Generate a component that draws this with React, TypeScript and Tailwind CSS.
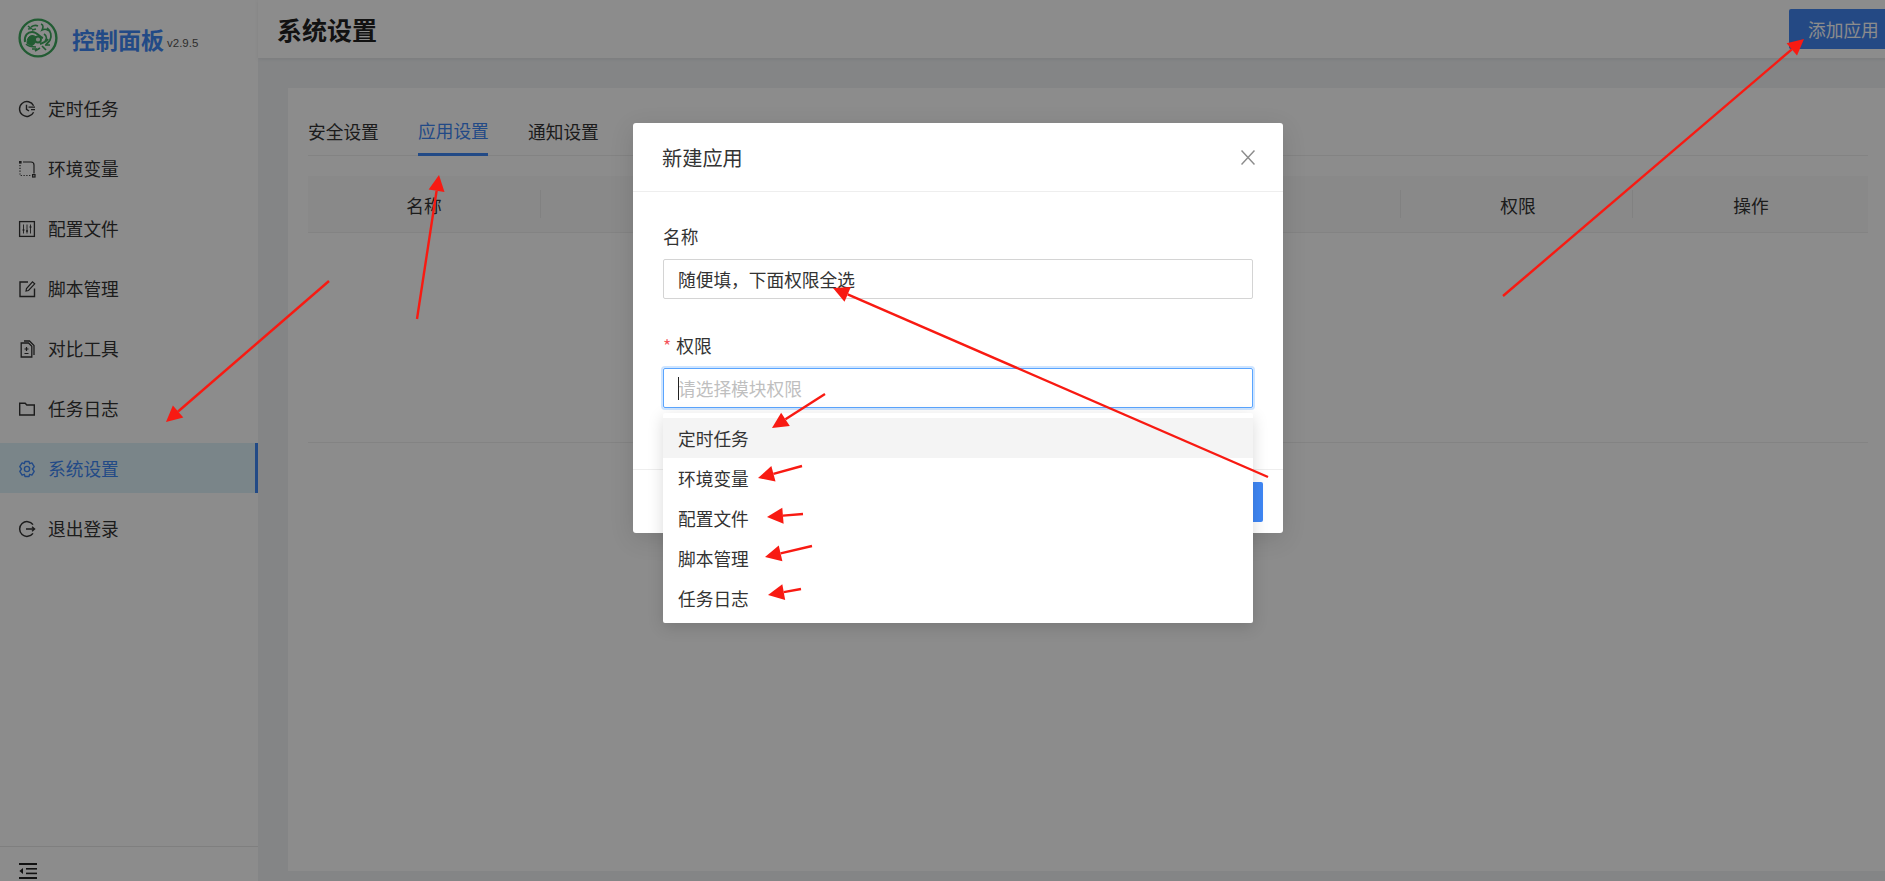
import React from "react";

const FONT = { fontFamily: '"Noto Sans CJK SC", "Liberation Sans", sans-serif' };

const Clock = () => (
  <svg width="18" height="18" viewBox="0 0 18 18" fill="none" stroke="currentColor" strokeWidth="1.4">
    <path d="M15.6 5.8A7.4 7.4 0 1 0 15.6 12.2" />
    <path d="M8.5 4.8V9.3L11 11" />
    <path d="M10.5 7.2H17M13 9.6H17" strokeWidth="1.2" />
  </svg>
);
const Dashed = () => (
  <svg width="18" height="18" viewBox="0 0 18 18" fill="none" stroke="currentColor" strokeWidth="1.2">
    <rect x="1" y="1" width="2.6" height="2.6" fill="currentColor" stroke="none" />
    <rect x="14.6" y="14.6" width="2.4" height="2.4" />
    <path d="M5 2H13A3 3 0 0 1 16 5V13.5" />
    <path d="M2 5V15.5H13.5" strokeDasharray="1.2 1.6" />
  </svg>
);
const Sliders = () => (
  <svg width="18" height="18" viewBox="0 0 18 18" fill="none" stroke="currentColor" strokeWidth="1.3">
    <rect x="1.6" y="1.6" width="14.8" height="14.8" />
    <path d="M5.5 4.5V13.5M9 4.5V13.5M12.5 4.5V13.5" strokeWidth="0.9" />
    <circle cx="5.5" cy="10" r="1" fill="currentColor" stroke="none" />
    <circle cx="9" cy="11" r="1" fill="currentColor" stroke="none" />
    <circle cx="12.5" cy="7" r="1" fill="currentColor" stroke="none" />
  </svg>
);
const Edit = () => (
  <svg width="18" height="18" viewBox="0 0 18 18" fill="none" stroke="currentColor" strokeWidth="1.4">
    <path d="M10 2H2V16.5H16.5V8.5" />
    <path d="M8 11L8.5 8.5L14.5 1.8L16.7 3.8L10.5 10.5Z" strokeWidth="1.2" />
  </svg>
);
const FileDiff = () => (
  <svg width="18" height="18" viewBox="0 0 18 18" fill="none" stroke="currentColor" strokeWidth="1.3">
    <path d="M10.5 3H3.2V17H13.8V6.3Z" />
    <path d="M6 1H11.5L16 5.5V15" />
    <path d="M8.5 7V11M6.5 9H10.5M6.5 13.5H10.5" strokeWidth="1.2" />
  </svg>
);
const Folder = () => (
  <svg width="18" height="18" viewBox="0 0 18 18" fill="none" stroke="currentColor" strokeWidth="1.4">
    <path d="M1.7 3.2H7.2L8.8 5H16.3V15H1.7Z" />
  </svg>
);
const Gear = () => (
  <svg width="18" height="18" viewBox="0 0 18 18" fill="none" stroke="currentColor" strokeWidth="1.4">
    <path d="M7 1.5H11L11.7 3.7L13.9 2.9L16.2 6.6L14.5 9L16.2 11.4L13.9 15.1L11.7 14.3L11 16.5H7L6.3 14.3L4.1 15.1L1.8 11.4L3.5 9L1.8 6.6L4.1 2.9L6.3 3.7Z" strokeLinejoin="round" />
    <circle cx="9" cy="9" r="2.6" />
  </svg>
);
const Exit = () => (
  <svg width="18" height="18" viewBox="0 0 18 18" fill="none" stroke="currentColor" strokeWidth="1.5">
    <path d="M15 4.6A7.4 7.4 0 1 0 15 13.4" />
    <path d="M8 9H16.5M14 6.8L16.6 9L14 11.2" strokeWidth="1.3" />
  </svg>
);
const Collapse = () => (
  <svg width="18" height="16" viewBox="0 0 18 16" fill="#222">
    <rect x="0" y="0" width="18" height="2" />
    <rect x="7" y="5" width="11" height="1.6" />
    <rect x="7" y="9.6" width="11" height="1.6" />
    <rect x="0" y="14" width="18" height="2" />
    <path d="M4 5L0.4 8L4 11Z" />
  </svg>
);

const Logo = () => (
  <svg width="40" height="40" viewBox="0 0 40 40" fill="none" stroke="#3fa85e">
    <circle cx="20" cy="20" r="18.4" strokeWidth="2.4" />
    <path d="M7 24C6 17 10 14 14 14C19 14 22 19 25 20" strokeWidth="2" />
    <path d="M10 8L13 10.5L10 11M13 9C16 7 18 7 20 8M14 12L18 11" strokeWidth="1.6" />
    <path d="M23 6C26 7 25 10 24 12C26 11 29 11 31 13" strokeWidth="1.6" />
    <path d="M29 10C33 13 34 18 32 22C31 24 29 25 28 27" strokeWidth="1.8" />
    <path d="M26 16C29 18 29 21 27 23" strokeWidth="1.6" />
    <path d="M8 26C11 29 15 29 18 29M14 31L19 31M17 33L22 30M24 28L28 32M27 27L32 27" strokeWidth="1.7" />
    <path d="M9 25C9 17 15 16 18 19C18 27 14 30 9 25Z" fill="#3fa85e" strokeWidth="1" />
    <circle cx="20" cy="21.5" r="3" fill="#e6f3e9" strokeWidth="1.8" />
    <path d="M22 26C25 25 28 24 30 21" strokeWidth="2" />
  </svg>
);

const NAV: [string, React.ReactNode, boolean?][] = [
  ["定时任务", <Clock />],
  ["环境变量", <Dashed />],
  ["配置文件", <Sliders />],
  ["脚本管理", <Edit />],
  ["对比工具", <FileDiff />],
  ["任务日志", <Folder />],
  ["系统设置", <Gear />, true],
  ["退出登录", <Exit />],
];

const ARROWS: [number, number, number, number][] = [
  [329, 281, 166, 422],
  [417, 319, 439, 175],
  [1503, 296, 1804, 39],
  [1268, 477, 833, 288],
  [825, 394, 772, 428],
  [802, 466, 758, 478],
  [803, 514, 767, 517],
  [812, 546, 765, 557],
  [801, 589, 768, 595],
];

function Arrow({ a }: { a: [number, number, number, number] }) {
  const [x1, y1, x2, y2] = a;
  const len = Math.hypot(x2 - x1, y2 - y1);
  const ux = (x2 - x1) / len;
  const uy = (y2 - y1) / len;
  const bx = x2 - ux * 16;
  const by = y2 - uy * 16;
  const pts = `${x2},${y2} ${bx - uy * 8},${by + ux * 8} ${bx + uy * 8},${by - ux * 8}`;
  return (
    <g>
      <line x1={x1} y1={y1} x2={bx} y2={by} stroke="#f81a12" strokeWidth="2.4" />
      <polygon points={pts} fill="#f81a12" />
    </g>
  );
}

export default function App() {
  return (
    <div style={FONT} className="relative flex h-[881px] w-[1885px] overflow-hidden bg-[#f0f2f5] text-[17.7px] text-[#333]">
      <aside className="flex w-[258px] shrink-0 flex-col bg-white">
        <div className="flex h-[83px] items-start pl-[18px] pt-[18px]">
          <Logo />
          <span className="ml-[14px] mt-[5px] text-[23px] font-bold leading-[32px] text-[#3f87f5]">控制面板</span>
          <span className="ml-[3px] mt-[17px] text-[11.5px] leading-[16px] text-[#555]" style={{ fontFamily: '"Liberation Sans", sans-serif' }}>v2.9.5</span>
        </div>
        <nav className="flex flex-1 flex-col gap-[10px]">
          {NAV.map(([label, icon, active]) => (
            <div
              key={label}
              className={
                active
                  ? "flex h-[50px] items-center gap-[12px] border-r-[3px] border-[#3f87f5] bg-[#def2fa] pl-[18px] pt-[1px] text-[#3f87f5]"
                  : "flex h-[50px] items-center gap-[12px] pl-[18px] pt-[1px]"
              }
            >
              {icon}
              <span>{label}</span>
            </div>
          ))}
        </nav>
        <div className="flex h-[35px] items-start border-t border-[#e8e8e8] pl-[19px] pt-[16px]">
          <Collapse />
        </div>
      </aside>

      <main className="flex w-[1664px] shrink-0 flex-col">
        <header className="flex h-[58px] shrink-0 items-center justify-between bg-white pl-[19px] pr-[25px] shadow-[0_1px_4px_rgba(0,0,0,0.08)]">
          <h1 className="text-[25px] font-bold leading-none text-[#222]">系统设置</h1>
          <button className="h-[40px] w-[108px] rounded-[2px] bg-[#4385f0] pl-[19px] text-left text-white">添加应用</button>
        </header>
        <section className="mx-[30px] mb-[10px] mt-[30px] flex-1 bg-white px-[20px] pt-[20px] pr-[24px]">
          <div className="flex h-[48px] gap-[40px] border-b border-[#eeeeee]">
            <div className="flex h-[48px] w-[70px] items-center whitespace-nowrap pb-[2px]">安全设置</div>
            <div className="flex h-[48px] w-[70px] items-center whitespace-nowrap border-b-[3px] border-[#3f87f5] text-[#3f87f5]">应用设置</div>
            <div className="flex h-[48px] w-[70px] items-center whitespace-nowrap pb-[2px]">通知设置</div>
          </div>
          <div className="mt-[20px] flex h-[57px] items-center border-b border-[#eeeeee] bg-[#fafafa]">
            <div className="flex h-[28px] w-[233px] items-center justify-center border-r border-[#ececec] pt-[2px]">名称</div>
            <div className="h-[28px] w-[860px] border-r border-[#ececec]" />
            <div className="flex h-[28px] w-[232px] items-center justify-center border-r border-[#ececec] pl-[3px] pt-[2px]">权限</div>
            <div className="flex h-[28px] flex-1 items-center justify-center pl-[1px] pt-[2px]">操作</div>
          </div>
          <div className="h-[210px] border-b border-[#eeeeee]" />
        </section>
      </main>

      <div className="absolute inset-0 bg-black/45 pl-[633px] pt-[123px]">
        <div className="relative w-[650px] rounded-[3px] bg-white shadow-[0_6px_24px_rgba(0,0,0,0.12)]">
          <div className="flex h-[69px] items-center justify-between border-b border-[#eeeeee] pl-[29px] pr-[28px] pt-[2px]">
            <span className="text-[20.2px]">新建应用</span>
            <svg className="-mt-[2px]" width="14" height="15" viewBox="0 0 14 15" stroke="#8c8c8c" strokeWidth="1.5" fill="none">
              <path d="M0.5 0.5L13.5 14.5M13.5 0.5L0.5 14.5" />
            </svg>
          </div>
          <div className="h-[277px] px-[30px] pt-[31px]">
            <label className="block h-[26px] leading-[26px]">名称</label>
            <input
              readOnly
              value="随便填，下面权限全选"
              className="mt-[10px] block h-[40px] w-[590px] rounded-[2px] border border-[#d4d4d4] px-[14px] outline-none"
            />
            <label className="mt-[33px] block h-[26px] leading-[26px]">
              <span className="mr-[5px] text-[#f5545a]">*</span>权限
            </label>
            <div className="relative mt-[10px] flex h-[40px] w-[590px] items-center rounded-[2px] border border-[#5aa5ff] pl-[14px] text-[#bfbfbf] shadow-[0_0_0_2px_rgba(64,150,255,0.25)]">
              <span className="absolute left-[14px] top-[8px] h-[23px] w-px bg-[#222]" />
              请选择模块权限
            </div>
          </div>
          <div className="flex h-[64px] items-start justify-end border-t border-[#eeeeee] pr-[20px] pt-[12px]">
            <button className="h-[40px] w-[90px] rounded-[2px] bg-[#3f87f5] text-white">确定</button>
          </div>

          <ul className="absolute left-[30px] top-[290px] w-[590px] rounded-[2px] bg-white py-[5px] shadow-[0_4px_16px_rgba(0,0,0,0.15)]">
            {["定时任务", "环境变量", "配置文件", "脚本管理", "任务日志"].map((t, i) => (
              <li key={t} className={i === 0 ? "flex h-[40px] items-center bg-[#f4f4f4] pl-[15px] pt-[1px]" : "flex h-[40px] items-center pl-[15px] pt-[1px]"}>
                {t}
              </li>
            ))}
          </ul>
        </div>
      </div>

      <svg className="pointer-events-none absolute inset-0" width="1885" height="881">
        {ARROWS.map((a) => (
          <Arrow key={a.join()} a={a} />
        ))}
      </svg>
    </div>
  );
}
